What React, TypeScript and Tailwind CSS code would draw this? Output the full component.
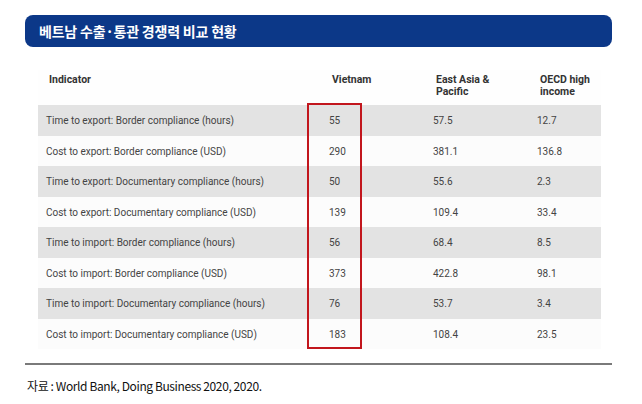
const rows = [
  { label: 'Time to export: Border compliance (hours)', vn: '55', eap: '57.5', oecd: '12.7' },
  { label: 'Cost to export: Border compliance (USD)', vn: '290', eap: '381.1', oecd: '136.8' },
  { label: 'Time to export: Documentary compliance (hours)', vn: '50', eap: '55.6', oecd: '2.3' },
  { label: 'Cost to export: Documentary compliance (USD)', vn: '139', eap: '109.4', oecd: '33.4' },
  { label: 'Time to import: Border compliance (hours)', vn: '56', eap: '68.4', oecd: '8.5' },
  { label: 'Cost to import: Border compliance (USD)', vn: '373', eap: '422.8', oecd: '98.1' },
  { label: 'Time to import: Documentary compliance (hours)', vn: '76', eap: '53.7', oecd: '3.4' },
  { label: 'Cost to import: Documentary compliance (USD)', vn: '183', eap: '108.4', oecd: '23.5' },
];

export default function App() {
  return (
    <div className="w-[642px] h-[404px] bg-white overflow-hidden">
      {/* title bar */}
      <div className="ml-[25px] mt-[15px] w-[587px] h-[32px] rounded-[8px] bg-[#0c3888] flex items-center pl-[14px]">
        <h1 className="text-white text-[14px] font-bold tracking-[-0.2px] font-['Noto_Sans_CJK_KR','Noto_Sans',sans-serif]">
          베트남 수출·통관 경쟁력 비교 현황
        </h1>
      </div>

      {/* table */}
      <div className="relative ml-[38px] mt-[23px] w-[563px] font-['Roboto','Noto_Sans',sans-serif]">
        <div className="grid grid-cols-[283px_104px_104px_1fr] h-[35px] items-start pt-[4px] pl-[11px] text-[10.5px] font-bold leading-[12px] text-[#333] bg-[#fefefe]">
          <span>Indicator</span>
          <span>Vietnam</span>
          <span>East Asia &amp;<br />Pacific</span>
          <span>OECD high<br />income</span>
        </div>
        {rows.map((r, i) => (
          <div
            key={r.label}
            className={`grid grid-cols-[283px_104px_104px_1fr] items-center pl-[8px] text-[10px] text-[#444] ${
              i % 2 === 0 ? 'bg-[#e3e3e3] h-[31px]' : 'bg-[#fcfcfc] h-[30px]'
            }`}
          >
            <span>{r.label}</span>
            <span>{r.vn}</span>
            <span>{r.eap}</span>
            <span>{r.oecd}</span>
          </div>
        ))}
        {/* highlight on Vietnam column */}
        <div className="absolute left-[269px] top-[33px] w-[55px] h-[246px] border-2 border-[#c2161d]" />
      </div>

      <div className="ml-[25px] mt-[14px] w-[587px] h-[2px] bg-[#7a7a7a]" />

      <p className="ml-[27px] mt-[12px] text-[12px] text-[#111] tracking-[-0.4px] font-['Noto_Sans_CJK_KR','Noto_Sans',sans-serif]">
        자료 : World Bank, Doing Business 2020, 2020.
      </p>
    </div>
  );
}
